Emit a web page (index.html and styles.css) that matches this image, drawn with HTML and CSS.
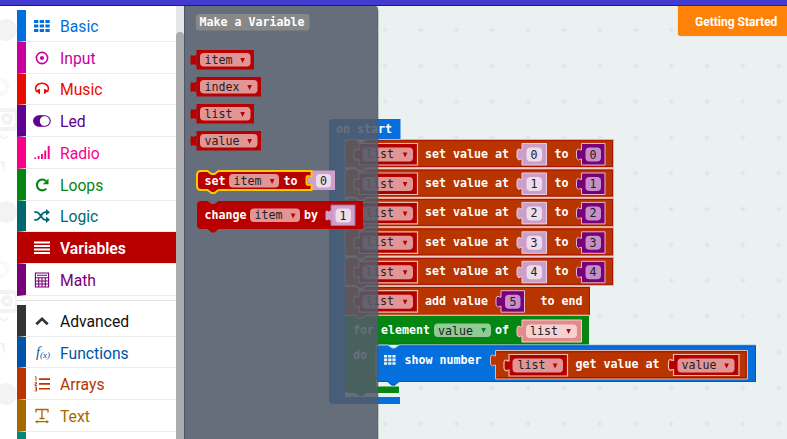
FILE: index.html
```html
<!DOCTYPE html>
<html lang="en">
<head>
<meta charset="utf-8">
<title>Block editor</title>
<link rel="stylesheet" href="styles.css">
</head>
<body>
<header class="topbar"></header>
<main class="editor">
<aside class="toolbox">
  <svg class="pattern" viewBox="0 6 50 433" width="50" height="433">
    <g fill="#f3f3f3"><circle cx="6" cy="30" r="11"/><circle cx="6" cy="212" r="11"/><circle cx="6" cy="394" r="11"/><path d="M0 161h5v11zM0 343h5v11z"/></g>
    <g fill="none" stroke="#f3f3f3"><circle cx="0" cy="87" r="7" stroke-width="4" stroke-dasharray="1 1"/><circle cx="0" cy="269" r="7" stroke-width="4" stroke-dasharray="1 1"/><g stroke-width="4"><path d="M0 110h12q5 0 5 5v9q0 5-5 5H0M0 292h12q5 0 5 5v9q0 5-5 5H0"/><circle cx="7" cy="119" r="4"/><circle cx="7" cy="301" r="4"/></g><path d="M0 135q4 6 8 1M0 317q4 6 8 1" stroke-width="2"/></g>
  </svg>
  <nav class="categories">
    <div class="cat basic"><svg class="icon" viewBox="0 0 16 16"><path fill="currentColor" d="M0 2h4.300v3H0zM5.700 2h4.300v3H5.700zM11.400 2h4.300v3h-4.300zM0 6.500h4.300v3H0zM5.700 6.500h4.300v3H5.700zM11.400 6.500h4.300v3h-4.300zM0 11h4.300v3H0zM5.700 11h4.300v3H5.700zM11.400 11h4.300v3h-4.300z"/></svg><span>Basic</span></div>
    <div class="cat input"><svg class="icon" viewBox="0 0 16 16"><circle cx="8" cy="8" r="5.6" fill="none" stroke="currentColor" stroke-width="1.6"/><circle cx="8" cy="8" r="2.1" fill="currentColor"/></svg><span>Input</span></div>
    <div class="cat music"><svg class="icon" viewBox="0 0 16 16"><path d="M2.700 11C-.3 6 3.500 2.300 8 2.300s8.300 3.700 5.300 8.700" fill="none" stroke="currentColor" stroke-width="1.5"/><path d="M2.800 9.700 5.500 8.300v4.600zM13.200 9.700 10.500 8.300v4.600z" fill="currentColor" stroke="currentColor"/></svg><span>Music</span></div>
    <div class="cat led"><svg class="icon toggle" viewBox="0 0 18 16"><rect x=".6" y="2.800" width="16.600" height="10.400" rx="5.200" fill="#fff" stroke="currentColor" stroke-width="1.100"/><path d="M6 2.800h6a5.200 5.200 0 0 0 0 10.400H6A5.200 5.200 0 0 1 6 2.800z" fill="currentColor"/><circle cx="12" cy="8" r="4.200" fill="#fff"/></svg><span>Led</span></div>
    <div class="cat radio"><svg class="icon" viewBox="0 0 16 16"><path fill="currentColor" d="M.5 12.200H2V14H.500zM3.700 11h1.800v3H3.700zM7 9h1.900v5H7zM10.300 5.500h1.900V14h-1.900zM13.700 1h2v13h-2z"/></svg><span>Radio</span></div>
    <div class="cat loops"><svg class="icon" viewBox="0 0 16 16"><path d="M12.300 11.600A5.400 5.400 0 1 1 12 4" fill="none" stroke="currentColor" stroke-width="2.100"/><path d="M14.500 1.500v5.800H8.800z" fill="currentColor"/></svg><span>Loops</span></div>
    <div class="cat logic"><svg class="icon" viewBox="0 0 16 16"><path d="M.3 4.200h2c4 0 5 7.600 9 7.600h2M.300 11.800h2c4 0 5-7.600 9-7.600h2" fill="none" stroke="currentColor" stroke-width="1.800"/><path d="M12 1 16 4.200l-4 3.200zM12 8.600l4 3.200-4 3.200z" fill="currentColor"/></svg><span>Logic</span></div>
    <div class="cat variables selected"><svg class="icon" viewBox="0 0 16 16"><path fill="currentColor" d="M0 1.500h16v2.100H0zM0 5h16v2.100H0zM0 8.500h16v2.100H0zM0 12h16v2.100H0z"/></svg><span>Variables</span></div>
    <div class="cat math"><svg class="icon" viewBox="0 0 16 16"><path d="M1.400 1h13.200v14H1.400zM1.400 5.700h13.200M1.400 9h13.200M1.400 12h13.200M4.700 5.700V15M8 5.700V15M11.300 5.700V15M3 3.300h10" fill="none" stroke="currentColor" stroke-width="1.100"/></svg><span>Math</span></div>
    <div class="separator"></div>
    <div class="cat advanced"><svg class="icon" viewBox="0 0 16 16"><path d="m2.300 11.300 5.700-5.500 5.700 5.500" fill="none" stroke="currentColor" stroke-width="2.700"/></svg><span>Advanced</span></div>
    <div class="cat functions"><svg class="icon" viewBox="0 0 16 16"><text x="2" y="12" class="fx">f<tspan class="fx-arg" dy="1">(x)</tspan></text></svg><span>Functions</span></div>
    <div class="cat arrays"><svg class="icon" viewBox="0 0 16 16"><path fill="currentColor" d="M5 2.300h11v1.700H5zM5 7.100h11v1.700H5zM5 11.900h11v1.700H5z"/><path d="M1 .8h1v4M.700 6.300H2.500v1.600H1v1.600h2M.7 11h1.800v4H.700M1 13h1.500" fill="none" stroke="currentColor" stroke-width=".9"/></svg><span>Arrays</span></div>
    <div class="cat text"><svg class="icon" viewBox="0 0 16 16"><path d="M2 4.500V1.500h12v3M8 1.500v9M5.500 10.500h5M2 13.700h12" fill="none" stroke="currentColor" stroke-width="1.300"/><path d="m1 13.700 2.500-1.800v3.600zM15 13.700l-2.500-1.800v3.600z" fill="currentColor"/></svg><span>Text</span></div>
    <div class="cat game"></div>
  </nav>
  <div class="scrollbar"><div class="thumb"></div></div>
</aside>
<section class="workspace">
<svg class="canvas" viewBox="184 6 603 433" width="603" height="433">
  <defs>
    <pattern id="grid" x="402.700" y="12.100" width="35.800" height="35.800" patternUnits="userSpaceOnUse"><path d="M15.300 17.900h5.400M18 15.200v5.400" stroke="#d8dddd" stroke-width=".9"/></pattern>
    <path id="tab" d="M0 5v10h-1.500q-1-2-3 0-1.500 0-1.500-2V7q0-2 1.500-2 2 2 3 0z"/>
    <path id="arrow" d="M.3 0h4.600L2.600 5z"/>
    <path id="row" d="M345 4q0-4 4-4h6.500l4 3h3l4-3H613.500V28H366.500l-4 3h-3l-4-3H345z"/>
    <g id="listslot"><path d="M359 4h58.500v21.500H359v-6q-2 0-3 1-2-1-2-3v-5q0-3 2-3 1 1 3 1z" fill="#b80000" stroke="#eeb9ab" stroke-width="1.200"/><path d="M360.500 6.200h54.800M360.500 23.400h54.800" stroke="#8f0000" stroke-width=".6"/><rect x="362.500" y="8" width="50.500" height="14" rx="4" fill="#e29595"/><use href="#arrow" x="402.500" y="13" fill="#b80000"/></g>
    <g id="indexslot"><path d="M522 4h24.500v21.500H522v-6q-2 0-3 1-2-1-2-3v-5q0-3 2-3 1 1 3 1z" fill="#cc9fc8" stroke="#eacde5"/><rect x="526.500" y="8" width="15.500" height="14" rx="4" fill="#ecdcec"/></g>
    <g id="mathslot"><path d="M581.500 4h23.500v21.500h-23.500v-6q-2 0-3 1-2-1-2-3v-5q0-3 2-3 1 1 3 1z" fill="#780078" stroke="#e5b9cd"/><rect x="585.500" y="8" width="15.500" height="14" rx="4" fill="#c78fca"/></g>
    <g id="setrow"><use href="#row" fill="#b83500" stroke="#eea99a"/><path d="M367 1.200h245.500V27H366" fill="none" stroke="#a81500"/><use href="#listslot"/><use href="#indexslot"/><use href="#mathslot"/></g>
  </defs>
  <rect x="184" y="6" width="603" height="433" fill="#ebf0f0"/>
  <rect x="184" y="6" width="603" height="433" fill="url(#grid)"/>
  <path d="M329 123q0-4 4-4h67.500v20.500H345V397h55v7H333q-4 0-4-4z" fill="#076fdd"/>
  <text class="code bold" x="336" y="132.500">on start</text>

  <g transform="translate(0 139.500)"><use href="#setrow"/><text class="code field" x="366" y="18.500">list</text><text class="code bold" x="425" y="18">set value at</text><text class="code field" x="530.500" y="19">0</text><text class="code bold" x="554.500" y="18">to</text><text class="code field" x="589.500" y="19">0</text></g>
  <g transform="translate(0 169)"><use href="#setrow"/><text class="code field" x="366" y="18.500">list</text><text class="code bold" x="425" y="18">set value at</text><text class="code field" x="530.500" y="19">1</text><text class="code bold" x="554.500" y="18">to</text><text class="code field" x="589.500" y="19">1</text></g>
  <g transform="translate(0 198.400)"><use href="#setrow"/><text class="code field" x="366" y="18.500">list</text><text class="code bold" x="425" y="18">set value at</text><text class="code field" x="530.500" y="19">2</text><text class="code bold" x="554.500" y="18">to</text><text class="code field" x="589.500" y="19">2</text></g>
  <g transform="translate(0 227.800)"><use href="#setrow"/><text class="code field" x="366" y="18.500">list</text><text class="code bold" x="425" y="18">set value at</text><text class="code field" x="530.500" y="19">3</text><text class="code bold" x="554.500" y="18">to</text><text class="code field" x="589.500" y="19">3</text></g>
  <g transform="translate(0 257.300)"><use href="#setrow"/><text class="code field" x="366" y="18.500">list</text><text class="code bold" x="425" y="18">set value at</text><text class="code field" x="530.500" y="19">4</text><text class="code bold" x="554.500" y="18">to</text><text class="code field" x="589.500" y="19">4</text></g>
  <g transform="translate(0 286.700)"><path d="M345 0h10.500l4 3h3l4-3H590v28.500H366.500l-4 3h-3l-4-3H345z" fill="#b83500"/><path d="M345 28.500h10.500l4 3h3l4-3H590" fill="none" stroke="#eea99a"/><path d="M367 .8h222.500v27" fill="none" stroke="#a81500"/><use href="#listslot"/><use href="#mathslot" x="-80.500"/><text class="code field" x="366" y="18.500">list</text><text class="code bold" x="425" y="18">add value</text><text class="code field" x="509.500" y="19">5</text><text class="code bold" x="540.500" y="18">to end</text></g>

  <path d="M345 316h10.500l4 3h3l4-3H589v28.500H376V386.500h23v6.500H366.500l-4 3h-3l-4-3H349q-4 0-4-4z" fill="#058512"/>
  <path d="M378 344h211" stroke="#067022"/>
  <text class="code bold" x="353" y="334">for element</text><text class="code bold" x="353" y="358.500">do</text>
  <rect x="434" y="323.500" width="57" height="13.500" rx="4" fill="#8fca97"/><text class="code field" x="438" y="334.500">value</text><use href="#arrow" x="481" y="328" fill="#058512"/>
  <text class="code bold" x="495" y="334">of</text>
  <path d="M522 320h59.500v22H522v-6q-2 0-3 1-2-1-2-3v-5q0-3 2-3 1 1 3 1z" fill="#e48a8a" stroke="#f4cdc6"/><rect x="526" y="324.500" width="51" height="13.500" rx="4" fill="#f5d2d2"/><text class="code field" x="530" y="335">list</text><use href="#arrow" x="566" y="329" fill="#b80000"/>

  <path d="M376 349q0-4 4-4h8l4 3h3l4-3H756V382H398.500l-4 3.500h-3l-4-3.500H380q-4 0-4-4z" fill="#0570dc"/>
  <path d="M376 378v-29q0-4 4-4h8l4 3h3l4-3H756" fill="none" stroke="#a9cbdf"/><path d="M378 381.500h10l4 3.500h3l4-3.500H755.500V346H400" fill="none" stroke="#0055cf"/>
  <path fill="#e7f4ff" d="M384 355h3.200v2.600H384zM388.200 355h3.200v2.600h-3.200zM392.400 355h3.200v2.600h-3.200zM384 358.600h3.200v2.600H384zM388.200 358.600h3.200v2.600h-3.200zM392.400 358.600h3.200v2.600h-3.200zM384 362.200h3.200v2.600H384zM388.200 362.200h3.200v2.600h-3.200zM392.400 362.200h3.200v2.600h-3.200z"/>
  <text class="code bold" x="404.500" y="363.500">show number</text>
  <path d="M495.500 350.500H747.500V379H495.500v-14q-2 0-3 1-2-1-2-3v-5q0-3 2-3 1 1 3 1z" fill="#b83500" stroke="#e5b5b0"/><path d="M497 351.800h249V377.600H497" fill="none" stroke="#a01500"/>
  <g transform="translate(150 350.500)"><use href="#listslot"/><text class="code field" x="367.500" y="18.500">list</text></g>
  <text class="code bold" x="575.500" y="368">get value at</text>
  <path d="M673.500 354.500H739V375.500h-65.500v-6q-2 0-3 1-2-1-2-3v-5q0-3 2-3 1 1 3 1z" fill="#b80000" stroke="#eeb9ab" stroke-width="1.200"/><rect x="677.500" y="358.500" width="57" height="14" rx="4" fill="#e29595"/><text class="code field" x="681.500" y="369">value</text><use href="#arrow" x="724" y="363.500" fill="#b80000"/>

  <path d="M184 6h191q3 0 3 3v430H184z" fill="#525b69" fill-opacity=".88"/>
  <path d="M378 10v429" stroke="#465365" stroke-opacity=".5"/>
  <path d="M184.500 6v433" stroke="#4b5768"/>
  <rect x="196" y="14" width="113.500" height="16.500" rx="3" fill="#888"/><text class="code bold" x="199.500" y="26">Make a Variable</text>
  <g fill="#b80000"><path d="M196.500 50H254v19.500h-57.500zM196.500 77h64.500v19.500h-64.500zM196.500 104H254v19.500h-57.500zM196.500 131h64.500v19.500h-64.500z"/><use href="#tab" x="196.500" y="50"/><use href="#tab" x="196.500" y="77"/><use href="#tab" x="196.500" y="104"/><use href="#tab" x="196.500" y="131"/></g>
  <g fill="#e29595"><rect x="200" y="53" width="50.500" height="13.500" rx="4"/><rect x="200" y="80" width="57.500" height="13.500" rx="4"/><rect x="200" y="107" width="50.500" height="13.500" rx="4"/><rect x="200" y="134" width="57.500" height="13.500" rx="4"/></g>
  <g fill="#b80000"><use href="#arrow" x="240" y="58"/><use href="#arrow" x="247" y="85"/><use href="#arrow" x="240" y="112"/><use href="#arrow" x="247" y="139"/></g>
  <text class="code field" x="204.500" y="63.500">item</text><text class="code field" x="204.500" y="90.500">index</text><text class="code field" x="204.500" y="117.500">list</text><text class="code field" x="204.500" y="144.500">value</text>

  <path d="M310 170.500h25v19.500h-25z" fill="#cfa0cd"/><path d="M197 175q0-4 4-4h6.500l4 3h3l4-3H311.500v5q-1.500 1-3 0-2 0-2 2v5q0 2 2 2 1.500-1 3 0v5H218.500l-4 3h-3l-4-3H201q-4 0-4-4z" fill="#b80000" stroke="#fdc900" stroke-width="2"/><path d="M312 177q-2 1.500-3.500.3-1 .2-1 1.200v4q0 1.200 1 1.200 1.500-1 3.500.5z" fill="#cfa0cd"/>
  <text class="code bold" x="204.500" y="184.500">set</text><rect x="229" y="174" width="50" height="13.500" rx="4" fill="#e29595"/><text class="code field" x="233.500" y="184.500">item</text><use href="#arrow" x="269.500" y="179" fill="#b80000"/><text class="code bold" x="283.500" y="184.500">to</text><rect x="316" y="174" width="15" height="13.500" rx="4" fill="#ecdcec"/><text class="code field" x="320" y="185">0</text>
  <path d="M197 205q0-4 4-4h6.500l4 3h3l4-3H363V229H218.500l-4 3.500h-3l-4-3.500H201q-4 0-4-4z" fill="#b80000"/>
  <text class="code bold" x="204.500" y="219">change</text><rect x="250" y="208.500" width="50" height="13.500" rx="4" fill="#e29595"/><text class="code field" x="254.500" y="219">item</text><use href="#arrow" x="290.500" y="213.500" fill="#b80000"/><text class="code bold" x="304" y="219">by</text><path d="M331 205h24v20.500h-24z" fill="#cfa0cd" stroke="#9c7094"/><use href="#tab" x="331.500" y="205.500" fill="#cfa0cd"/><rect x="335.500" y="208.500" width="15.500" height="14" rx="4" fill="#ecdcec"/><text class="code field" x="339.500" y="219.500">1</text>
</svg>
<div class="getting-started">Getting Started</div>
</section>
</main>
</body>
</html>
```

FILE: styles.css
```css
* { box-sizing: border-box; }
body { margin: 0; width: 787px; height: 439px; overflow: hidden; font-family: Roboto, sans-serif; background: #fff; }
.topbar { height: 6px; background: #423bd0; border-bottom: 1px solid #180fbd; }
.editor { display: flex; height: 433px; }
.toolbox { position: relative; width: 184px; display: flex; padding-left: 17px; background: #fff; }
.pattern { position: absolute; left: 0; top: 0; clip-path: inset(0 33px 0 0); }
.categories { position: relative; width: 159px; padding-top: 4px; overflow: hidden; }
.cat { display: flex; align-items: center; height: 31.780px; border-left: 9px solid currentColor; border-bottom: 1px solid #e9eded; padding-left: 8px; padding-top: 1px; gap: 10px; font-size: 15.700px; white-space: nowrap; background: linear-gradient(#fff, #fff) padding-box; background-clip: padding-box; }
.cat span { padding-top: 1px; }
.icon { width: 16px; height: 16px; flex: none; overflow: visible; }
.toggle { width: 18px; margin: 0 -1px; }
.separator { height: 9px; border-bottom: 0; background: linear-gradient(#eadfe0, #eadfe0) 0 4px / 100% 1px no-repeat; }
.basic { color: #006edc; }
.input { color: #c8009b; }
.music { color: #e90b00; }
.led { color: #600091; }
.radio { color: #f90089; }
.loops { color: #078512; }
.logic { color: #006970; }
.variables { color: #b80000; }
.cat.selected { background: #b80000; border-left-color: #b80000; }
.selected .icon, .selected span { color: #fff; }
.selected span { font-weight: 600; }
.math { color: #780078; }
.advanced { color: #333; }
.advanced span { color: #111; }
.functions { color: #0053a8; }
.arrays { color: #b83500; }
.text { color: #a66800; }
.game { color: #078875; }
.fx { font: italic 14px "Liberation Serif", serif; fill: currentColor; }
.fx-arg { font-size: 9px; }
.scrollbar { width: 8px; background: #e6e6e6; padding-top: 26px; }
.thumb { height: 100%; background: #ababab; border-radius: 4px 4px 0 0; }
.workspace { position: relative; width: 603px; }
.canvas { display: block; }
.code { font-family: "DejaVu Sans Mono", monospace; font-size: 11.630px; white-space: pre; }
.bold { font-weight: 700; fill: #fff; }
.field { fill: #222; }
.getting-started { position: absolute; right: 0; top: 0; width: 109.500px; height: 30px; background: #ff8208; border-radius: 0 0 0 3px; box-shadow: 0 0 1px #999; color: #fff; font-size: 12px; font-weight: 700; line-height: 32px; padding-left: 17.500px; white-space: nowrap; }
```
